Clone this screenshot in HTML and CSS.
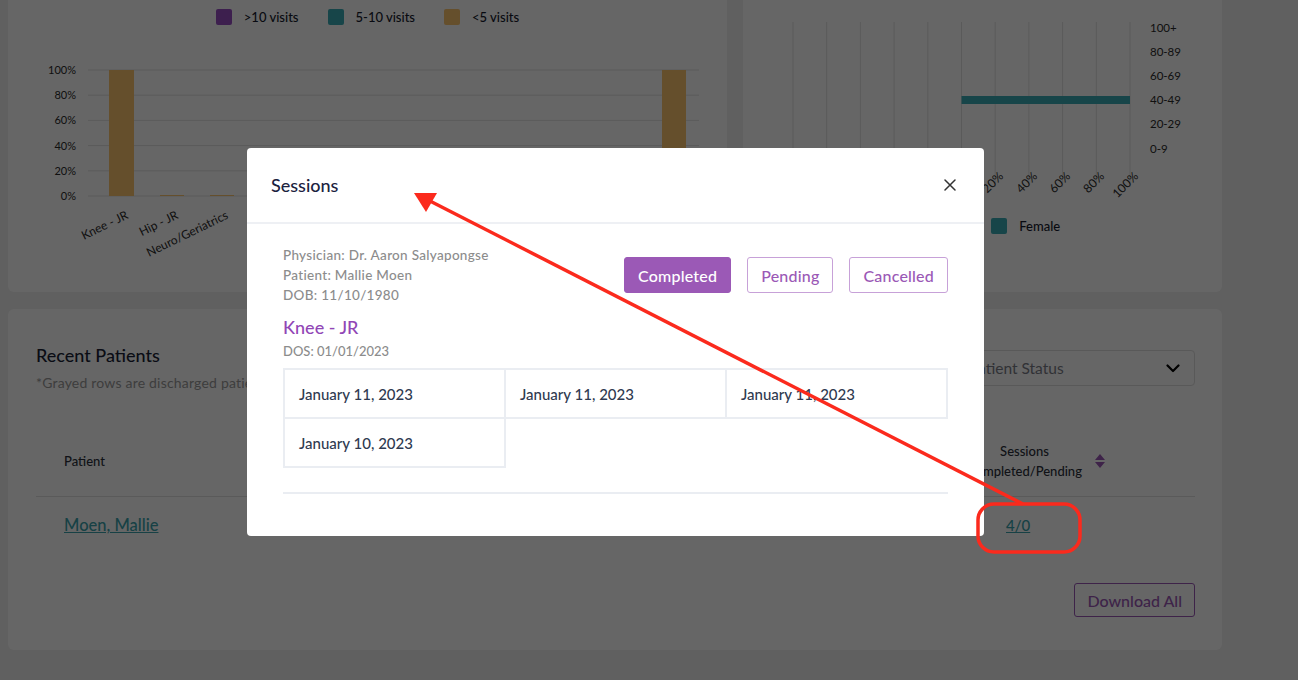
FILE: index.html
```html
<!DOCTYPE html>
<html lang="en">
<head>
<meta charset="utf-8">
<title>Dashboard – Sessions</title>
<link rel="stylesheet" href="styles.css">
</head>
<body>
<div class="page">
  <div class="top-row">
    <section class="card chart-card">
      <div class="legend">
        <span class="legend-item"><i class="swatch swatch--purple"></i>&gt;10 visits</span>
        <span class="legend-item"><i class="swatch swatch--teal"></i>5-10 visits</span>
        <span class="legend-item"><i class="swatch swatch--gold"></i>&lt;5 visits</span>
      </div>
      <svg class="bar-chart" width="719" height="266" viewBox="0 0 719 266">
        <g class="grid">
          <line x1="80" y1="44" x2="691" y2="44"/>
          <line x1="80" y1="69.2" x2="691" y2="69.2"/>
          <line x1="80" y1="94.4" x2="691" y2="94.4"/>
          <line x1="80" y1="119.6" x2="691" y2="119.6"/>
          <line x1="80" y1="144.8" x2="691" y2="144.8"/>
          <line x1="80" y1="170" x2="691" y2="170"/>
        </g>
        <g class="axis-y">
          <text x="68" y="48">100%</text>
          <text x="68" y="73">80%</text>
          <text x="68" y="98">60%</text>
          <text x="68" y="124">40%</text>
          <text x="68" y="149">20%</text>
          <text x="68" y="174">0%</text>
        </g>
        <rect class="bar-gold" x="101" y="44" width="25" height="126"/>
        <rect class="bar-gold" x="152" y="169" width="24" height="1"/>
        <rect class="bar-gold" x="202" y="169" width="24" height="1"/>
        <rect class="bar-gold" x="654" y="44" width="24" height="126"/>
        <g class="axis-x">
          <text x="121" y="192" transform="rotate(-26 121 192)">Knee - JR</text>
          <text x="171" y="192" transform="rotate(-26 171 192)">Hip - JR</text>
          <text x="221" y="192" transform="rotate(-26 221 192)">Neuro/Geriatrics</text>
        </g>
      </svg>
    </section>

    <section class="card chart-card chart-card--age">
      <svg class="age-chart" width="479" height="205" viewBox="0 0 479 205">
        <g class="grid">
          <line x1="50" y1="22" x2="50" y2="187"/>
          <line x1="83.7" y1="22" x2="83.7" y2="187"/>
          <line x1="117.4" y1="22" x2="117.4" y2="187"/>
          <line x1="151.1" y1="22" x2="151.1" y2="187"/>
          <line x1="184.8" y1="22" x2="184.8" y2="187"/>
          <line x1="218.5" y1="22" x2="218.5" y2="187"/>
          <line x1="252.2" y1="22" x2="252.2" y2="187"/>
          <line x1="285.9" y1="22" x2="285.9" y2="187"/>
          <line x1="319.6" y1="22" x2="319.6" y2="187"/>
          <line x1="353.3" y1="22" x2="353.3" y2="187"/>
          <line x1="387" y1="22" x2="387" y2="187"/>
        </g>
        <rect class="bar-teal" x="218.5" y="96" width="168.5" height="8"/>
        <g class="axis-age">
          <text x="407" y="32">100+</text>
          <text x="407" y="56">80-89</text>
          <text x="407" y="80">60-69</text>
          <text x="407" y="104">40-49</text>
          <text x="407" y="128">20-29</text>
          <text x="407" y="153">0-9</text>
        </g>
        <g class="axis-x">
          <text x="59" y="177" transform="rotate(-45 59 177)">100%</text>
          <text x="93" y="177" transform="rotate(-45 93 177)">80%</text>
          <text x="126" y="177" transform="rotate(-45 126 177)">60%</text>
          <text x="160" y="177" transform="rotate(-45 160 177)">40%</text>
          <text x="194" y="177" transform="rotate(-45 194 177)">20%</text>
          <text x="227" y="177" transform="rotate(-45 227 177)">0%</text>
          <text x="261" y="177" transform="rotate(-45 261 177)">20%</text>
          <text x="295" y="177" transform="rotate(-45 295 177)">40%</text>
          <text x="328" y="177" transform="rotate(-45 328 177)">60%</text>
          <text x="362" y="177" transform="rotate(-45 362 177)">80%</text>
          <text x="396" y="177" transform="rotate(-45 396 177)">100%</text>
        </g>
      </svg>
      <div class="legend legend--age">
        <span class="legend-item"><i class="swatch swatch--purple"></i>Male</span>
        <span class="legend-item"><i class="swatch swatch--teal"></i>Female</span>
      </div>
    </section>
  </div>

  <section class="card patients-card">
    <div class="patients-head">
      <div class="patients-title">
        <h2>Recent Patients</h2>
        <p>*Grayed rows are discharged patients</p>
      </div>
      <div class="select">
        <span>Patient Status</span>
        <svg width="14" height="9" viewBox="0 0 14 9"><path d="M1.5 1.5 L7 7 L12.5 1.5" fill="none" stroke="#000" stroke-width="2.2" stroke-linecap="round" stroke-linejoin="round"/></svg>
      </div>
    </div>

    <div class="ptable">
      <div class="prow prow--head">
        <div class="pcell pcell--first">Patient</div>
        <div class="pcell">Physician</div>
        <div class="pcell">Diagnosis</div>
        <div class="pcell">Start of Care</div>
        <div class="pcell pcell--sessions">
          <span class="sessions-label">Sessions<br>Completed/Pending</span>
          <svg class="sort" width="12" height="16" viewBox="0 0 12 16"><path d="M1 7 L6 1 L11 7 Z M1 9 L6 15 L11 9 Z"/></svg>
        </div>
      </div>
      <div class="prow">
        <div class="pcell pcell--first"><a class="link link--name" href="#">Moen, Mallie</a></div>
        <div class="pcell">Dr. Aaron Salyapongse</div>
        <div class="pcell">Knee - JR</div>
        <div class="pcell">01/01/2023</div>
        <div class="pcell pcell--count"><a class="link" href="#">4/0</a></div>
      </div>
    </div>

    <div class="patients-foot">
      <button class="btn btn--outline-dim" type="button">Download All</button>
    </div>
  </section>
</div>

<div class="backdrop"></div>

<div class="modal" role="dialog">
  <div class="modal-head">
    <h3>Sessions</h3>
    <svg class="close" width="12" height="12" viewBox="0 0 12 12"><path d="M1 1 L11 11 M11 1 L1 11" stroke="#333" stroke-width="1.5" stroke-linecap="round"/></svg>
  </div>
  <div class="modal-body">
    <div class="info-row">
      <div class="info">
        <div>Physician: Dr. Aaron Salyapongse</div>
        <div>Patient: Mallie Moen</div>
        <div>DOB: 11/10/1980</div>
      </div>
      <div class="tabs">
        <button class="btn btn--solid" type="button">Completed</button>
        <button class="btn btn--outline" type="button">Pending</button>
        <button class="btn btn--outline" type="button">Cancelled</button>
      </div>
    </div>
    <div class="dx">Knee - JR</div>
    <div class="dos">DOS: 01/01/2023</div>
    <div class="dates">
      <div class="date">January 11, 2023</div>
      <div class="date">January 11, 2023</div>
      <div class="date">January 11, 2023</div>
      <div class="date">January 10, 2023</div>
    </div>
    <div class="rule"></div>
  </div>
</div>

<svg class="annotation" width="1298" height="680" viewBox="0 0 1298 680">
  <line x1="1023" y1="504" x2="428" y2="200" stroke="#fb2a1d" stroke-width="3.5"/>
  <polygon points="414,193 437,193 426,212" fill="#fb2a1d"/>
  <rect x="978" y="504" width="102" height="48" rx="16" ry="16" fill="none" stroke="#fb2a1d" stroke-width="3.5"/>
</svg>
</body>
</html>
```

FILE: styles.css
```css
* { box-sizing: border-box; }

html, body {
  margin: 0;
  padding: 0;
}

body {
  min-height: 100vh;
  background: #f0f0f0;
  font-family: Lato, "Liberation Sans", sans-serif;
  color: #1a1f36;
  overflow: hidden;
  position: relative;
}

.page {
  width: 1214px;
  margin-left: 8px;
}

.card {
  background: #fff;
  border-radius: 6px;
}

.top-row {
  display: grid;
  grid-template-columns: 719px 479px;
  gap: 16px;
  margin-top: -20px;
}

.chart-card {
  padding-top: 28px;
}

.chart-card svg { display: block; }

.chart-card--age {
  padding-top: 20px;
}

.legend {
  display: flex;
  justify-content: center;
  gap: 29px;
  height: 18px;
  align-items: center;
}

.legend--age {
  margin-top: 12px;
  gap: 30px;
}

.legend-item {
  display: flex;
  align-items: center;
  gap: 12px;
  font-size: 13px;
  font-weight: 500;
  color: #161b2e;
}

.swatch {
  display: block;
  width: 16px;
  height: 16px;
  border-radius: 2px;
}

.swatch--purple { background: #9a4fc4; }
.swatch--teal { background: #3aacb6; }
.swatch--gold { background: #fdc56f; }

.grid line {
  stroke: #e2e2e2;
  stroke-width: 1;
}

.bar-gold { fill: #fdc56f; }
.bar-teal { fill: #3aacb6; }

.axis-y text {
  font-size: 11px;
  text-anchor: end;
  fill: #2a2a2a;
}

.axis-x text {
  font-size: 12px;
  text-anchor: end;
  fill: #2a2a2a;
}

.axis-age text {
  font-size: 11.5px;
  fill: #2a2a2a;
}

/* Recent patients */
.patients-card {
  margin-top: 17px;
  padding: 34px 27px 33px 28px;
}

.patients-head {
  display: flex;
  justify-content: space-between;
  align-items: center;
}

.patients-title h2 {
  margin: 0;
  font-size: 18px;
  line-height: 24px;
  font-weight: 500;
  color: #1a1f36;
}

.patients-title p {
  margin: 6px 0 0;
  font-size: 14px;
  line-height: 20px;
  letter-spacing: 0.2px;
  color: #9a9a9a;
}

.select {
  width: 241px;
  height: 36px;
  border: 1px solid #dedede;
  border-radius: 4px;
  display: flex;
  align-items: center;
  justify-content: space-between;
  padding: 0 14px;
  font-size: 15.5px;
  color: #7a7d88;
}

.select svg { display: block; }

.ptable {
  margin-top: 33px;
}

.prow {
  display: grid;
  grid-template-columns: 230px 1fr 1fr 1fr 228px;
  height: 56px;
  align-items: center;
}

.prow--head {
  height: 71px;
  border-bottom: 1px solid #e2e2e2;
  font-size: 13px;
  font-weight: 500;
  color: #2b2f3a;
}

.pcell {
  font-size: 13px;
}

.pcell--first { padding-left: 28px; }

.prow:not(.prow--head) .pcell { font-size: 15px; }

.pcell--sessions {
  display: flex;
  align-items: center;
}

.sessions-label {
  text-align: center;
  line-height: 20px;
}

.sort {
  margin-left: 12px;
  fill: #9b59b6;
}

.pcell--count { padding-left: 39px; }

.link {
  color: #3aa3ad;
  text-decoration: underline;
  font-size: 15px;
  font-weight: 500;
}

.prow .link--name { font-size: 16.5px; }

.patients-foot {
  margin-top: 30px;
  display: flex;
  justify-content: flex-end;
}

.btn {
  font-family: Lato, "Liberation Sans", sans-serif;
  height: 36px;
  padding: 0 13px;
  border-radius: 3px;
  font-size: 16px;
  letter-spacing: 0.2px;
  font-weight: 500;
  cursor: pointer;
}

.btn--outline-dim {
  height: 34px;
  padding: 0 12px;
  font-size: 16px;
  letter-spacing: 0;
  background: #fff;
  border: 1px solid #9b59b6;
  color: #9b59b6;
}

/* Modal */
.backdrop {
  position: fixed;
  inset: 0;
  background: rgba(0, 0, 0, 0.6);
}

.modal {
  position: absolute;
  left: 247px;
  top: 148px;
  width: 737px;
  background: #fff;
  border-radius: 4px;
}

.modal-head {
  height: 76px;
  padding: 0 28px 0 24px;
  display: flex;
  align-items: center;
  justify-content: space-between;
  border-bottom: 2px solid #eef0f4;
}

.modal-head h3 {
  margin: 0;
  font-size: 18px;
  font-weight: 500;
  color: #1b2240;
}

.close { display: block; }

.modal-body {
  padding: 21px 36px 42px;
}

.info-row {
  display: flex;
  justify-content: space-between;
  align-items: center;
}

.info {
  font-size: 13.5px;
  line-height: 20px;
  letter-spacing: 0.3px;
  color: #8c8c8c;
  font-weight: 500;
}

.tabs {
  display: flex;
  gap: 16px;
}

.btn--solid {
  background: #9b59b6;
  border: 1px solid #9b59b6;
  color: #fff;
}

.btn--outline {
  background: #fff;
  border: 1px solid #c7a1d8;
  color: #9b59b6;
}

.dx {
  margin-top: 10px;
  font-size: 18px;
  line-height: 24px;
  font-weight: 500;
  color: #9146b6;
}

.dos {
  margin-top: 2px;
  font-size: 13px;
  line-height: 20px;
  color: #8c8c8c;
  font-weight: 500;
}

.dates {
  margin-top: 7px;
  display: grid;
  grid-template-columns: repeat(3, 1fr);
  border-top: 2px solid #eaedf2;
  border-left: 2px solid #eaedf2;
}

.date {
  height: 49px;
  display: flex;
  align-items: center;
  padding-left: 14px;
  border-right: 2px solid #eaedf2;
  border-bottom: 2px solid #eaedf2;
  font-size: 15px;
  font-weight: 500;
  color: #2f3a50;
}

.rule {
  margin-top: 24px;
  height: 2px;
  background: #eaedf2;
}

.annotation {
  position: absolute;
  left: 0;
  top: 0;
  pointer-events: none;
}
```
